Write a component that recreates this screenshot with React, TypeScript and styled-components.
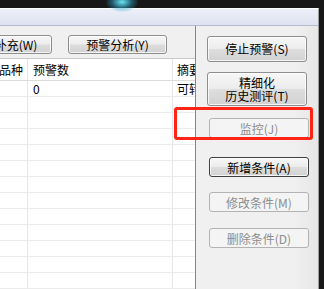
import styled, { createGlobalStyle } from 'styled-components';

const GlobalStyle = createGlobalStyle`
  html, body {
    margin: 0;
    padding: 0;
    background: #161616;
  }
  body {
    font-family: "Noto Sans CJK SC", "DejaVu Sans", sans-serif;
  }
`;

const Screen = styled.div`
  position: relative;
  display: flex;
  flex-direction: column;
  width: 324px;
  height: 289px;
  overflow: hidden;
  background: #181818;
`;
const Glow = styled.div`
  position: absolute;
  left: 106px;
  top: -8px;
  width: 32px;
  height: 20px;
  border-radius: 50%;
  background: radial-gradient(ellipse at center, rgba(110, 240, 255, 0.95) 0%, rgba(40, 160, 200, 0.45) 45%, rgba(0, 0, 0, 0) 75%);
`;
const Desk = styled.div`
  flex: none;
  height: 8px;
`;
const Window = styled.div`
  display: flex;
  flex-direction: column;
  flex: 1;
  width: 318px;
  min-height: 0;
  background: #f0f0f0;
  border-top: 1px solid #ffffff;
  border-right: 1px solid #9c9c9c;
`;
const TitleBand = styled.div`
  flex: none;
  height: 16px;
  background: linear-gradient(#eceff8, #dfe3f1);
  border-bottom: 1px solid #b4bbcc;
`;
const Body = styled.div`
  display: flex;
  flex: 1;
  min-height: 0;
`;
const LeftPane = styled.div`
  display: flex;
  flex-direction: column;
  width: 195px;
  overflow: hidden;
  border-right: 1px solid #858585;
`;
const Toolbar = styled.div`
  display: flex;
  gap: 16px;
  margin-left: -20px;
  padding-top: 9px;
  height: 30px;
`;
const Button = styled.button<{ $w?: number; $h: number; $off?: boolean; $main?: boolean }>`
  box-sizing: border-box;
  flex: none;
  width: ${({ $w }) => ($w ? `${$w}px` : '100px')};
  height: ${({ $h }) => $h}px;
  padding: 0;
  border: 1px solid ${({ $off, $main }) => ($off ? '#b3b3b3' : $main ? '#3f3f3f' : '#8e8e8e')};
  border-radius: 3px;
  background: ${({ $off }) =>
    $off ? '#f4f4f4' : 'linear-gradient(#f7f7f7 0%, #ececec 48%, #dddddd 52%, #d2d2d2 100%)'};
  box-shadow: inset 0 0 0 1px ${({ $off }) => ($off ? '#f4f4f4' : 'rgba(255, 255, 255, 0.75)')};
  color: ${({ $off }) => ($off ? '#8d8d8d' : '#000000')};
  font-family: "Noto Sans CJK SC", "DejaVu Sans", sans-serif;
  font-size: 12px;
  line-height: 13px;
  white-space: pre-line;
  text-align: center;
`;
const Table = styled.div`
  flex: 1;
  margin-left: -6px;
  background: #ffffff;
  border-top: 1px solid #c9c9c9;
`;
const Row = styled.div<{ $head?: boolean }>`
  display: grid;
  grid-template-columns: 34px 145px 1fr;
  height: ${({ $head }) => ($head ? 21 : 15)}px;
  border-bottom: 1px solid ${({ $head }) => ($head ? '#dcdcdc' : '#ebebeb')};
  background: #ffffff;
`;
const Cell = styled.div`
  padding-left: 5px;
  border-right: 1px solid #e6e6e6;
  font-size: 12px;
  line-height: 15px;
  color: #000000;
  white-space: nowrap;
  overflow: hidden;
  display: flex;
  align-items: center;

  &:last-child {
    padding-left: 4px;
    border-right: none;
  }
`;
const RightPane = styled.div`
  display: flex;
  flex-direction: column;
  flex: 1;
  padding: 9px 0 0 11px;
  background: linear-gradient(90deg, #f0f0f0 0%, #f0f0f0 80%, #e6e6e6 100%);
`;
const Slot = styled.div<{ $gap: number; $shift?: number }>`
  margin-top: ${({ $gap }) => $gap}px;
  margin-left: ${({ $shift }) => $shift ?? 0}px;
`;
const Marker = styled.div`
  position: absolute;
  left: 174px;
  top: 107px;
  width: 133px;
  height: 27px;
  border: 3px solid #ff2414;
  border-radius: 3px;
`;

const rows: string[][] = [
  ['', '0', '可转债'],
  ...Array.from({ length: 12 }, () => ['', '', '']),
];

const sideButtons = [
  { label: '停止预警(S)', h: 26, gap: 0, shift: 0 },
  { label: '精细化\n历史测评(T)', h: 34, gap: 10, shift: 0 },
  { label: '监控(J)', h: 20, gap: 9, shift: 2, off: true },
  { label: '新增条件(A)', h: 20, gap: 15, shift: 2, main: true },
  { label: '修改条件(M)', h: 20, gap: 11, shift: 2, off: true },
  { label: '删除条件(D)', h: 20, gap: 12, shift: 2, off: true },
];

export default function App() {
  return (
    <>
      <GlobalStyle />
      <Screen>
        <Desk />
        <Glow />
        <Window>
          <TitleBand />
          <Body>
            <LeftPane>
              <Toolbar>
                <Button $w={72} $h={19}>
                  补充(W)
                </Button>
                <Button $w={99} $h={19}>
                  预警分析(Y)
                </Button>
              </Toolbar>
              <Table>
                <Row $head>
                  <Cell>品种</Cell>
                  <Cell>预警数</Cell>
                  <Cell>摘要</Cell>
                </Row>
                {rows.map((row, index) => (
                  <Row key={index}>
                    {row.map((text, i) => (
                      <Cell key={i}>{text}</Cell>
                    ))}
                  </Row>
                ))}
              </Table>
            </LeftPane>
            <RightPane>
              {sideButtons.map((b) => (
                <Slot key={b.label} $gap={b.gap} $shift={b.shift}>
                  <Button $h={b.h} $off={b.off} $main={b.main}>
                    {b.label}
                  </Button>
                </Slot>
              ))}
            </RightPane>
          </Body>
        </Window>
        <Marker />
      </Screen>
    </>
  );
}
